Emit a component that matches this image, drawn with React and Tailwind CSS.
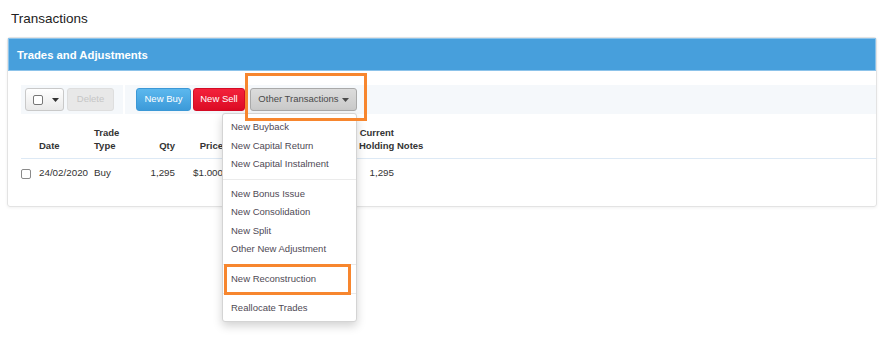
import React from "react";

const font = { fontFamily: '"Liberation Sans", Arial, sans-serif' };

function Caret({ className = "" }) {
  return (
    <svg width="7" height="4" viewBox="0 0 7 4" className={className}>
      <path d="M0 0h7L3.5 4z" fill="currentColor" />
    </svg>
  );
}

const menu = [
  ["New Buyback", "New Capital Return", "New Capital Instalment"],
  ["New Bonus Issue", "New Consolidation", "New Split", "Other New Adjustment"],
  ["New Reconstruction"],
  ["Reallocate Trades"],
];

function Dropdown() {
  return (
    <ul className="absolute right-0 top-[calc(100%+2px)] z-10 w-[135px] rounded-[3px] border border-[#d4d4d4] bg-white pt-[4px] pb-[3px] shadow-[0_4px_10px_rgba(0,0,0,0.18)]">
      {menu.map((group, gi) => (
        <React.Fragment key={gi}>
          {gi > 0 && <li className="my-[5px] h-px bg-[#ebebeb]" />}
          {group.map((label) => (
            <li
              key={label}
              className="relative h-[18.5px] pl-[8px] text-[9.5px] leading-[18.5px] text-[#4f4a55] whitespace-nowrap"
            >
              {label}
              {label === "New Reconstruction" && (
                <span className="pointer-events-none absolute left-[1px] right-[5px] top-[-6px] bottom-[-7px] border-[3px] border-[#f7862e]" />
              )}
            </li>
          ))}
        </React.Fragment>
      ))}
    </ul>
  );
}

function Toolbar() {
  return (
    <div className="flex h-[29px] gap-[2px]">
      <div className="flex items-center gap-[3px] bg-[#f5f8fb] pl-[4px] pr-[9px]">
        <button className="flex h-[23px] w-[39px] items-center gap-[9px] rounded-[3px] border border-[#c9c9c9] bg-gradient-to-b from-white to-[#e9e9e9] pl-[7px] text-[#333]">
          <span className="h-[10px] w-[10px] rounded-[2px] border border-[#777] bg-white" />
          <Caret />
        </button>
        <button className="h-[23px] w-[47px] rounded-[3px] border border-[#dedede] bg-[#e8e8e8] text-[9.5px] text-[#c6c6c6]">
          Delete
        </button>
      </div>
      <div className="flex flex-1 items-center bg-[#f5f8fb] pl-[11px]">
        <button className="h-[23px] w-[55px] rounded-[3px] border border-[#3b98d6] bg-gradient-to-b from-[#5cb8ee] to-[#3c9ad9] text-[9.5px] text-white">
          New Buy
        </button>
        <button className="ml-[2px] h-[23px] w-[52px] rounded-[3px] border border-[#d40b24] bg-gradient-to-b from-[#f3213b] to-[#dc0a24] text-[9.5px] text-white">
          New Sell
        </button>
        <div className="relative ml-[5px]">
          <button className="flex h-[23px] w-[107px] items-center justify-center gap-[3px] rounded-[3px] border border-[#a9a9a9] bg-gradient-to-b from-[#dcdcdc] to-[#c9c9c9] text-[9.5px] text-[#4a4a4a]">
            Other Transactions
            <Caret />
          </button>
          <span className="pointer-events-none absolute left-[-5px] right-[-10px] top-[-15px] bottom-[-10px] z-20 border-[3px] border-[#f7862e]" />
          <Dropdown />
        </div>
      </div>
    </div>
  );
}

const cols = "grid grid-cols-[18px_55px_41px_43px_48px_133px_38px_1fr]";

function Table() {
  return (
    <div className="text-[#333]">
      <div className={`${cols} h-[45px] items-end border-b border-[#dde9f5] pb-[6px] text-[9.5px] font-bold leading-[13px]`}>
        <div />
        <div>Date</div>
        <div>
          Trade
          <br />
          Type
        </div>
        <div className="pr-[3px] text-right">Qty</div>
        <div className="pr-[3px] text-right">Price</div>
        <div />
        <div className="pr-[3px] text-right">
          Current
          <br />
          Holding
        </div>
        <div>Notes</div>
      </div>
      <div className={`${cols} h-[28px] items-center pt-[1px] text-[9.8px]`}>
        <div>
          <span className="block h-[10px] w-[10px] rounded-[2px] border border-[#8a8a8a] bg-white" />
        </div>
        <div>24/02/2020</div>
        <div>Buy</div>
        <div className="pr-[3px] text-right">1,295</div>
        <div className="pr-[3px] text-right">$1.000</div>
        <div />
        <div className="pr-[3px] text-right">1,295</div>
        <div />
      </div>
    </div>
  );
}

export default function App() {
  return (
    <div style={font} className="min-h-[337px] w-[882px] bg-white px-[7px]">
      <h1 className="pt-[9px] pl-[4px] text-[13.5px] leading-[20px] text-[#222]">Transactions</h1>
      <section className="mt-[8px] mr-[-2px] rounded-[3px] border border-[#e3e3e3] shadow-[0_1px_3px_rgba(0,0,0,0.06)]">
        <header className="flex h-[33px] items-center border border-[#8cc3ea] bg-[#479fdc] pt-[2px] pl-[8px] text-[11.3px] font-bold text-white">
          Trades and Adjustments
        </header>
        <div className="pt-[14px] pb-[19px] pl-[13px]">
          <Toolbar />
          <Table />
        </div>
      </section>
    </div>
  );
}
